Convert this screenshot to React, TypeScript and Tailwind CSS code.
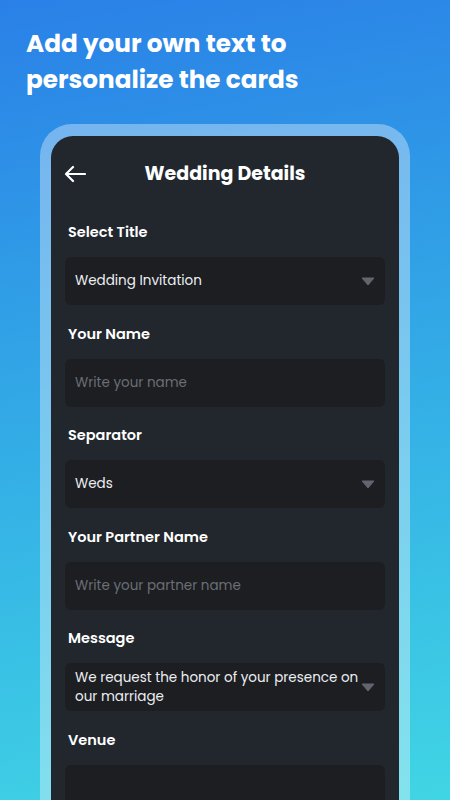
import React from "react";

const font = { fontFamily: "Poppins, Inter, 'Noto Sans', sans-serif" };

function Caret() {
  return (
    <svg width="14" height="9" viewBox="0 0 14 9" className="shrink-0">
      <path d="M1 1 H13 L7 8 Z" fill="#62646e" stroke="#62646e" strokeWidth="1" strokeLinejoin="round" />
    </svg>
  );
}

function Field({ label, value, placeholder, select, multi }: { label: string; value?: string; placeholder?: string; select?: boolean; multi?: boolean }) {
  return (
    <div className="flex flex-col">
      <div className="h-5 leading-5 text-[14.5px] font-semibold text-white pl-[3px]">{label}</div>
      <div className="mt-[15px] h-12 rounded-[6px] bg-[#1c1e22] flex items-center justify-between pl-[10px] pr-[10px]">
        {value ? (
          <span className={"text-[13.5px] text-[#eceef2] " + (multi ? "leading-[19px] pr-[2px]" : "leading-5")}>{value}</span>
        ) : (
          <span className="text-[13.5px] text-[#6b6e75] leading-5">{placeholder ?? ""}</span>
        )}
        {select && <Caret />}
      </div>
    </div>
  );
}

export default function App() {
  return (
    <div style={font} className="w-[450px] h-[800px] overflow-hidden bg-[linear-gradient(170deg,#2a80e7_0%,#34b0e6_55%,#40d5e4_100%)] flex flex-col">
      <div className="pl-[26px] pt-[26px] text-[24.7px] leading-[36px] font-bold text-white">
        Add your own text to
        <br />
        personalize the cards
      </div>
      <div className="mt-[26px] mx-[40px] rounded-t-[32px] bg-white/35 pt-[12px] px-[11px] flex-1">
        <div className="h-full rounded-t-[22px] bg-[#22272e] px-[14px] flex flex-col">
          <div className="relative h-[74px] flex items-center justify-center">
            <svg className="absolute left-[-1px] top-[29px]" width="22" height="18" viewBox="0 0 22 18">
              <path d="M21 9 H2 M9 2 L2 9 L9 16" fill="none" stroke="white" strokeWidth="2.2" strokeLinecap="round" strokeLinejoin="round" />
            </svg>
            <span className="text-[19px] font-bold text-white mt-[2px]">Wedding Details</span>
          </div>
          <div className="mt-[12px] flex flex-col gap-y-[18.5px]">
            <Field label="Select Title" value="Wedding Invitation" select />
            <Field label="Your Name" placeholder="Write your name" />
            <Field label="Separator" value="Weds" select />
            <Field label="Your Partner Name" placeholder="Write your partner name" />
            <Field label="Message" value="We request the honor of your presence on our marriage" select multi />
            <Field label="Venue" />
          </div>
        </div>
      </div>
    </div>
  );
}
